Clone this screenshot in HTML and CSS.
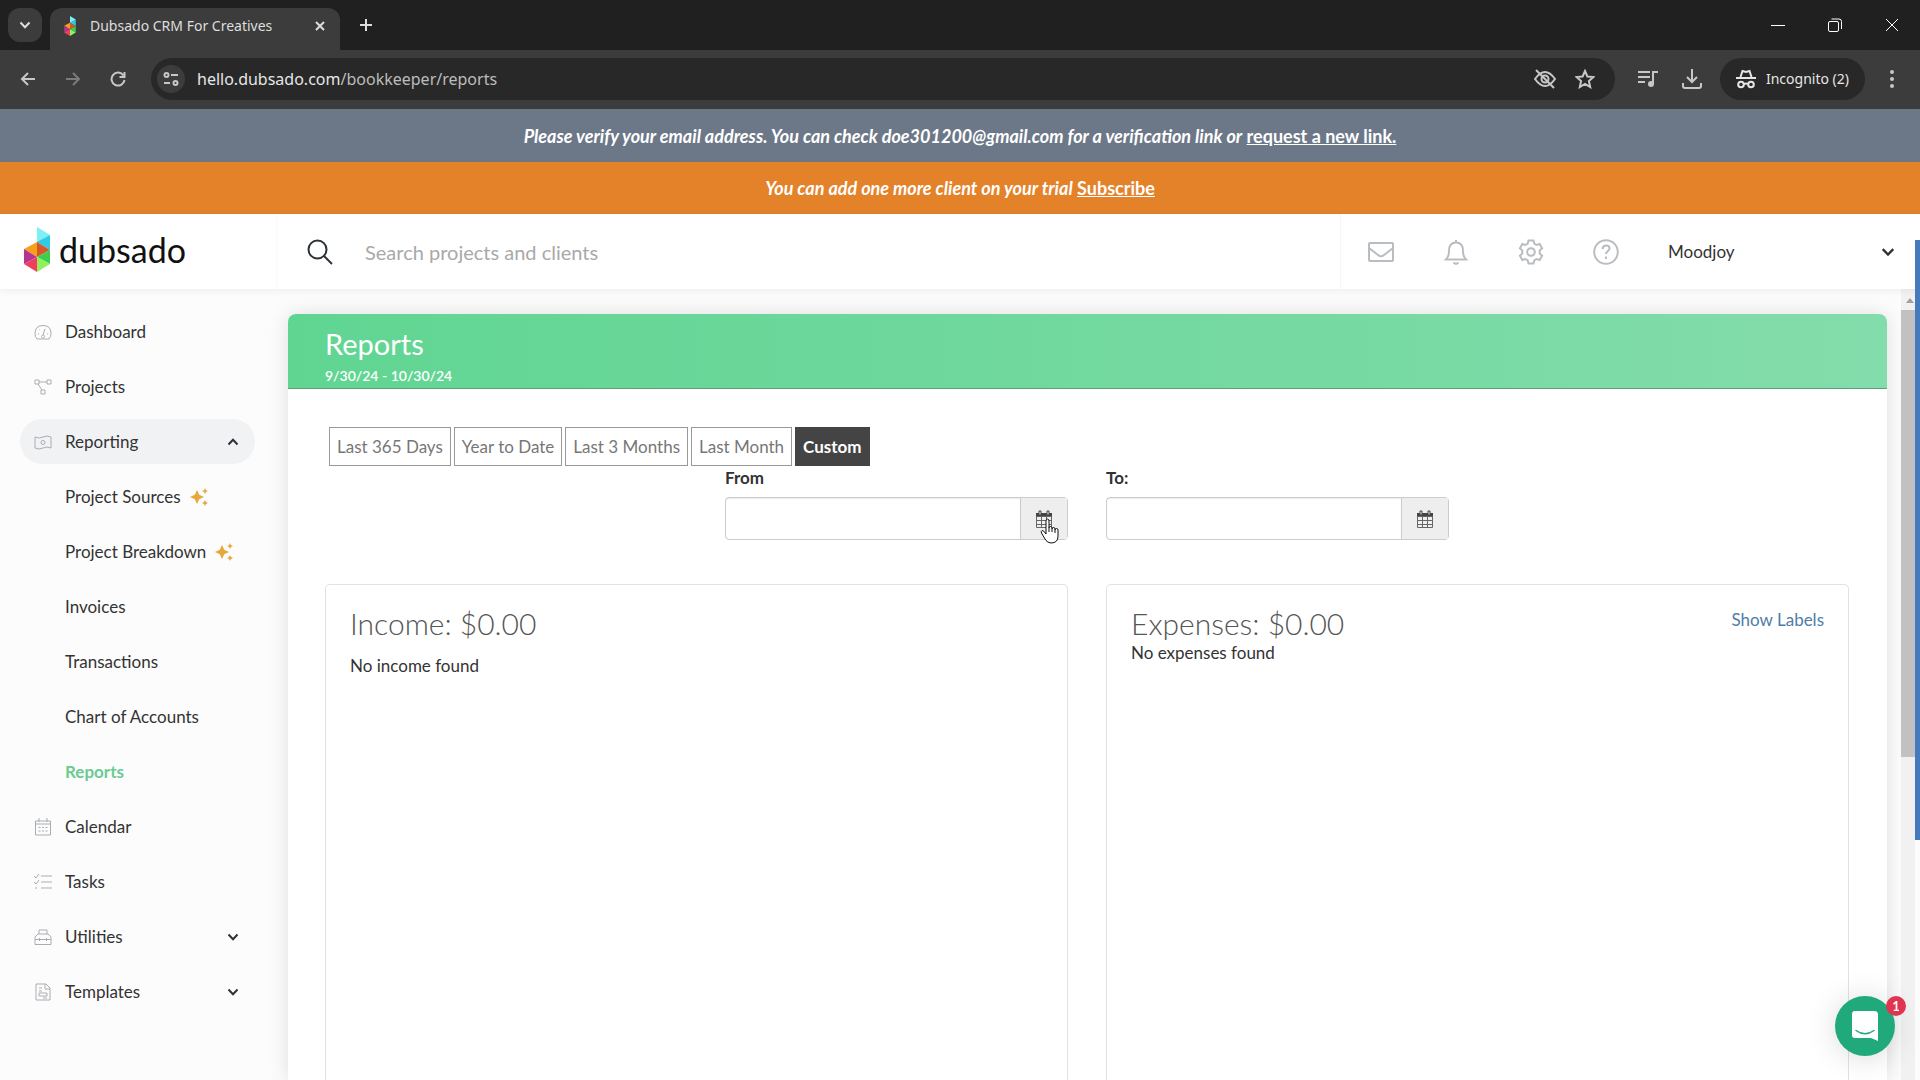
FILE: index.html
```html
<!DOCTYPE html>
<html lang="en">
<head>
  <meta charset="UTF-8" />
  <meta name="viewport" content="width=device-width, initial-scale=1.0" />
  <title>Dubsado CRM For Creatives</title>
  <link rel="stylesheet" href="styles.css">
</head>
<body>
  <svg class="sprite" aria-hidden="true">
    <defs>
      <symbol id="i-down" viewBox="0 0 12 12"><path d="M1.5 3.5 6 8.2l4.500-4.700" /></symbol>
      <symbol id="i-logo" viewBox="0 0 26 45">
        <path fill="#7df0f5" d="M13 0 26 8 13 16z" /><path fill="#2fcbe4" d="M26 8v15L13 15z" />
        <path fill="#f6a11c" d="M13 15v15L0 22z" /><path fill="#d8552a" d="m13 15 13 8-13 7z" />
        <path fill="#b5348f" d="M0 22l13 8-13 7z" /><path fill="#f03e5e" d="M0 37l13-7v15z" />
        <path fill="#3ccf4e" d="m26 23-13 7 13 7z" /><path fill="#93f05a" d="M13 30l13 7-13 8z" />
      </symbol>
      <symbol id="i-sparkle" viewBox="0 0 18 18">
        <path d="M7 2 9.200 6.800l4.800 2.200-4.800 2.200L7 16l-2.200-4.800L0 9l4.800-2.200zM15 0l1 2.200 2 .8-2 1-1 2-1-2-2-1 2-.8zM15 12l1 2 2 1-2 1-1 2-1-2-2-1 2-1z" />
      </symbol>
      <symbol id="i-cal" viewBox="0 0 18 18">
        <path fill="#444" d="M1 3h16v4H1z" /><path fill="none" stroke="#666" d="M1.500 6.500h15v11h-15zM6.500 6.500v11M11.500 6.500v11M1.500 10.500h15M1.500 14.500h15" />
        <path fill="#eee" stroke="#444" d="M4 1h2v4H4zM12 1h2v4h-2z" />
      </symbol>
    </defs>
  </svg>

  <div class="tabstrip">
    <button class="tab-search" aria-label="Search tabs"><svg class="line" width="12" height="12"><use href="#i-down" /></svg></button>
    <div class="tab">
      <svg width="12" height="20"><use href="#i-logo" /></svg>
      <span>Dubsado CRM For Creatives</span>
      <button aria-label="Close tab"><svg class="line" width="10" height="10" viewBox="0 0 10 10"><path d="m1 1 8 8M9 1 1 9" /></svg></button>
    </div>
    <button class="new-tab" aria-label="New tab"><svg class="line" width="12" height="12" viewBox="0 0 12 12"><path d="M6 0v12M0 6h12" /></svg></button>
    <div class="window-buttons">
      <button aria-label="Minimize"><svg width="14" height="14" viewBox="0 0 14 14"><path d="M0 7.500h14" /></svg></button>
      <button aria-label="Restore"><svg width="14" height="14" viewBox="0 0 14 14"><path d="M.5 5q0-1.500 1.500-1.500h7q1.500 0 1.500 1.500v7q0 1.500-1.500 1.500H2Q.5 13.500.5 12zM3.500 1h7.500q2.500 0 2.500 2.500V11" /></svg></button>
      <button aria-label="Close"><svg width="14" height="14" viewBox="0 0 14 14"><path d="m1 1 12 12M13 1 1 13" /></svg></button>
    </div>
  </div>

  <div class="toolbar">
    <button aria-label="Back"><svg class="line" width="16" height="16" viewBox="0 0 16 16"><path d="M15 8H2M8 2 2 8l6 6" /></svg></button>
    <button class="dim" aria-label="Forward"><svg class="line" width="16" height="16" viewBox="0 0 16 16"><path d="M1 8h13M8 2l6 6-6 6" /></svg></button>
    <button aria-label="Reload"><svg class="line" width="16" height="16" viewBox="0 0 16 16"><path d="M13.500 4.500A6.500 6.500 0 1 0 14.500 9M14.500 1v5h-5" /></svg></button>
    <div class="omnibox">
      <button class="site-info" aria-label="Site information"><svg class="line" width="16" height="16" viewBox="0 0 16 16"><circle cx="3.500" cy="4" r="2" /><path d="M8 4h7M1 12h6" /><circle cx="12.500" cy="12" r="2" /></svg></button>
      <div class="url">hello.dubsado.com<span>/bookkeeper/reports</span></div>
      <button aria-label="Tracking blocked"><svg class="line" width="24" height="22" viewBox="0 0 24 22"><path d="M2 11Q12-3 22 11 12 25 2 11zM3 2l18 18" /><circle cx="12" cy="11" r="3.500" /></svg></button>
      <button aria-label="Bookmark"><svg class="line" width="20" height="20" viewBox="0 0 20 20"><path d="m10 2 2.400 5.500 6 .5-4.500 4 1.300 6L10 14.800 4.800 18l1.300-6-4.500-4 6-.5z" /></svg></button>
    </div>
    <button class="media" aria-label="Media controls"><svg class="line" width="20" height="18" viewBox="0 0 20 18"><path d="M0 2h12M0 7h12M0 12h7M15 14V2h5" /><circle cx="13" cy="14" r="3" fill="#c7c7c7" stroke="none" /></svg></button>
    <button aria-label="Downloads"><svg class="line" width="20" height="20" viewBox="0 0 20 20"><path d="M10 0v13M5 8l5 5 5-5M1 14v3q0 2 2 2h14q2 0 2-2v-3" /></svg></button>
    <button class="incognito">
      <svg class="line" width="20" height="20" viewBox="0 0 20 20"><path d="M0 9h20M4.500 8l2-6L10 3l3.500-1 2 6M8 15q2-1 4 0" /><circle cx="5" cy="15.500" r="2.800" /><circle cx="15" cy="15.500" r="2.800" /></svg>
      Incognito (2)
    </button>
    <button aria-label="Menu"><svg class="dots" width="4" height="18" viewBox="0 0 4 18"><circle cx="2" cy="2" r="2" /><circle cx="2" cy="9" r="2" /><circle cx="2" cy="16" r="2" /></svg></button>
  </div>

  <div class="banner verify"><em>Please verify your email address. You can check doe301200@gmail.com for a verification link or</em>&nbsp;<a href="#">request a new link.</a></div>
  <div class="banner trial"><em>You can add one more client on your trial</em>&nbsp;<a href="#">Subscribe</a></div>

  <header>
    <a class="brand" href="#"><svg width="26" height="45"><use href="#i-logo" /></svg><span>dubsado</span></a>
    <div class="search">
      <svg width="26" height="26" viewBox="0 0 26 26"><circle cx="10.500" cy="10.500" r="9" /><path d="m17 17 8 8" /></svg>
      <input type="text" placeholder="Search projects and clients" aria-label="Search projects and clients">
    </div>
    <nav class="quick">
      <button aria-label="Mail"><svg width="26" height="26" viewBox="0 0 26 26"><rect x="1" y="4" width="24" height="18" rx="1" /><path d="m1 9 9 7q3 2.500 6 0l9-7" /></svg></button>
      <button aria-label="Notifications"><svg width="26" height="26" viewBox="0 0 26 26"><path d="M13 1v2M3 20.500h20q-3-3-3-8.500 0-8.500-7-8.500T6 12q0 5.500-3 8.500zM10.500 23.500q2.500 2.500 5 0" /></svg></button>
      <button aria-label="Settings"><svg width="26" height="26" viewBox="0 0 26 26"><path d="M10.500 1.500h5l.8 3.200 2.200 1.300 3.200-1 2.400 4.200-2.400 2.300v3l2.400 2.300-2.400 4.200-3.200-1-2.200 1.300-.8 3.200h-5l-.8-3.200L7.500 20l-3.200 1-2.400-4.200 2.400-2.300v-3L1.900 9.200 4.300 5l3.200 1 2.200-1.300z" /><circle cx="13" cy="13" r="3.800" /></svg></button>
      <button aria-label="Help"><svg width="26" height="26" viewBox="0 0 26 26"><circle cx="13" cy="13" r="11.800" /><path d="M9.500 10q.5-3.500 3.700-3.500 3.300 0 3.300 3c0 2.500-3.500 2.500-3.500 5.500M13 17.500V20" /></svg></button>
    </nav>
    <button class="account">Moodjoy <svg class="line" width="14" height="14"><use href="#i-down" /></svg></button>
  </header>

  <div class="app">
    <nav class="sidebar">
      <a href="#"><svg viewBox="0 0 18 18"><path d="M3 16q-2-2-2-5.500Q1 2.500 9 2.500t8 8q0 3.500-2 5.500zM9 12l2-6M4 11h1M13 11h1M5.500 6.500l.5.500M9 12a1.500 1.500 0 1 0 .1 0" /></svg>Dashboard</a>
      <a href="#"><svg viewBox="0 0 18 18"><path d="M1 2h4v4H1zM13 2h4v4h-4zM7 12h4v4H7zM5 4h8M4 6l4 6" /></svg>Projects</a>
      <a href="#" class="open"><svg viewBox="0 0 18 18"><path d="M1 4q4 2 8 0t8 0v11q-4-2-8 0t-8 0z" /><circle cx="9" cy="9.500" r="2" /></svg>Reporting<svg class="chev up"><use href="#i-down" /></svg></a>
      <a href="#" class="sub">Project Sources <svg class="spark"><use href="#i-sparkle" /></svg></a>
      <a href="#" class="sub">Project Breakdown <svg class="spark"><use href="#i-sparkle" /></svg></a>
      <a href="#" class="sub">Invoices</a>
      <a href="#" class="sub">Transactions</a>
      <a href="#" class="sub">Chart of Accounts</a>
      <a href="#" class="sub current">Reports</a>
      <a href="#"><svg viewBox="0 0 18 18"><path d="M1.500 3h15v14h-15zM1.500 6h15M5 0v4M13 0v4M4.500 9.500h2M8 9.500h2M11.500 9.500h2M4.500 13h2M8 13h2M11.500 13h2" /></svg>Calendar</a>
      <a href="#"><svg viewBox="0 0 18 18"><path d="M7 3h11M7 9h11M7 15h11M0 3l2 2 3-4M0 9l2 2 3-4M1 15h2" /></svg>Tasks</a>
      <a href="#"><svg viewBox="0 0 18 18"><path d="M1 16.500V9l3-3h10l3 3v7.500zM5 6V2h8v4M1 11.500h16M5.500 10v3M12.500 10v3" /></svg>Utilities<svg class="chev"><use href="#i-down" /></svg></a>
      <a href="#"><svg viewBox="0 0 18 18"><path d="M2 1h10l4 4v12H2zM11 1v5h5M5 5h3M5 8h3M5 10h8v3H5zM9 15h4" /></svg>Templates<svg class="chev"><use href="#i-down" /></svg></a>
    </nav>

    <main>
      <section class="report">
        <div class="report-head">
          <h1>Reports</h1>
          <p>9/30/24 - 10/30/24</p>
        </div>
        <div class="report-body">
          <div class="ranges">
            <button>Last 365 Days</button>
            <button>Year to Date</button>
            <button>Last 3 Months</button>
            <button>Last Month</button>
            <button class="active">Custom</button>
          </div>
          <div class="dates">
            <div class="field">
              <label for="from">From</label>
              <div class="input-group">
                <input type="text" id="from">
                <button aria-label="Pick start date"><svg width="18" height="18"><use href="#i-cal" /></svg>
                  <svg class="pointer" width="20" height="26" viewBox="0 0 20 26"><path d="M6 14V3q0-2 1.500-2T9 3v7q0-1.500 1.500-1.500T12 10v1q0-1.500 1.500-1.500T15 11v1q0-1.500 1.500-1.500T18 12v6q0 7-7 7-4 0-6-4l-3.500-6q-.8-2 .5-2.500 1.500-.5 4 3.500zM9 10v4M12 11v3M15 12v3" /></svg></button>
              </div>
            </div>
            <div class="field">
              <label for="to">To:</label>
              <div class="input-group">
                <input type="text" id="to">
                <button aria-label="Pick end date"><svg width="18" height="18"><use href="#i-cal" /></svg></button>
              </div>
            </div>
          </div>
          <div class="panels">
            <div class="panel income">
              <h2>Income: $0.00</h2>
              <p>No income found</p>
            </div>
            <div class="panel">
              <a class="labels" href="#">Show Labels</a>
              <h2>Expenses: $0.00</h2>
              <p>No expenses found</p>
            </div>
          </div>
        </div>
      </section>
    </main>

    <div class="scrollbar"><span class="arrow"></span><span class="thumb"></span></div>
  </div>

  <div class="page-scroll"></div>
  <button class="chat" aria-label="Open chat">
    <svg width="28" height="32" viewBox="0 0 28 32"><path fill="#fff" d="M3.500 1h20Q27 1 27 4.500V31l-7-3H3.500Q1 28 1 25V4.500Q1 1 3.500 1z" /><path fill="none" stroke="#20a97a" stroke-width="1.500" stroke-linecap="round" d="M5 20.500q9 6.500 18 0" /></svg>
    <span class="badge">1</span>
  </button>
</body>
</html>
```
FILE: styles.css
```css
* {
  box-sizing: border-box;
}
body {
  display: flex;
  flex-direction: column;
  height: 100vh;
  margin: 0;
  overflow: hidden;
  font-family: Lato, "Open Sans", sans-serif;
  font-size: 17px;
  line-height: 24px;
  color: #333;
  background: #fcfcfc;
}
button, input {
  font: inherit;
  color: inherit;
  border: 0;
  padding: 0;
  background: none;
}
a {
  color: inherit;
  text-decoration: none;
}
svg {
  display: block;
  flex-shrink: 0;
}
h1, h2, p {
  margin: 0;
}
.sprite {
  position: absolute;
  width: 0;
  height: 0;
}
.line {
  fill: none;
  stroke: currentColor;
  stroke-width: 2;
}

/* browser */
.tabstrip {
  display: flex;
  align-items: center;
  flex: 0 0 50px;
  padding-left: 8px;
  background: #202020;
  color: #dedede;
  font: 14px/20px "Noto Sans", sans-serif;
}
.tabstrip button {
  display: grid;
  place-items: center;
}
.tab-search {
  width: 34px;
  height: 34px;
  border-radius: 12px;
  background: #3c3c3c;
}
.tab {
  display: flex;
  align-items: center;
  gap: 14px;
  align-self: flex-end;
  width: 290px;
  height: 42px;
  margin-left: 8px;
  padding: 0 15px 6px 14px;
  border-radius: 12px 12px 0 0;
  background: #3c3c3c;
}
.tab button {
  margin-left: auto;
}
.new-tab {
  margin-left: 20px;
}
.window-buttons {
  display: flex;
  margin-left: auto;
}
.window-buttons button {
  width: 57px;
}
.window-buttons svg {
  fill: none;
  stroke: #fff;
}
.toolbar {
  display: flex;
  align-items: center;
  gap: 29px;
  flex: 0 0 59px;
  padding: 0 26px 2px 20px;
  background: #3c3c3c;
  color: #c7c7c7;
  font: 16px/24px "Noto Sans", sans-serif;
}
.toolbar .dim {
  color: #7b7b7b;
}
.omnibox {
  display: flex;
  align-items: center;
  gap: 18px;
  flex: 1;
  height: 42px;
  margin: 0 -6px 0 -4px;
  padding: 0 20px 0 6px;
  border-radius: 21px;
  background: #282828;
}
.site-info {
  display: grid;
  place-items: center;
  width: 28px;
  height: 28px;
  border-radius: 50%;
  background: #3c3c3c;
}
.url {
  flex: 1;
  margin-left: -6px;
  color: #e6e6e6;
}
.url span {
  color: #bcbcbc;
}
.media {
  margin-right: -5px;
}
.incognito {
  display: flex;
  align-items: center;
  gap: 10px;
  height: 42px;
  margin: 0 -4px 0 -11px;
  padding: 0 16px;
  border-radius: 21px;
  background: #282828;
  color: #e6e6e6;
  font-size: 14px;
}
.dots {
  fill: currentColor;
}

/* notices */
.banner {
  display: flex;
  justify-content: center;
  align-items: center;
  flex: 0 0 53px;
  color: #fff;
  font-weight: bold;
  font-size: 18px;
}
.banner a {
  text-decoration: underline;
}
.verify {
  background: #6c7888;
}
.trial {
  flex-basis: 52px;
  background: #e4822a;
}

/* top bar */
header {
  position: relative;
  z-index: 1;
  display: flex;
  flex: 0 0 75px;
  background: #fff;
  box-shadow: 0 2px 8px rgba(0, 0, 0, 0.06);
}
.brand {
  display: flex;
  align-items: center;
  gap: 9px;
  width: 277px;
  padding: 0 0 4px 24px;
  border-right: 1px solid #fafafa;
  color: #111;
  font-size: 34px;
}
.search {
  display: flex;
  align-items: center;
  gap: 32px;
  flex: 1;
  padding-left: 30px;
  border-right: 1px solid #f6f6f6;
}
.search svg {
  fill: none;
  stroke: #2c3238;
  stroke-width: 2;
}
.search input {
  flex: 1;
  font-size: 20px;
  outline: 0;
}
.search input::placeholder {
  color: #a9a9a9;
}
.quick {
  display: flex;
  align-items: center;
  gap: 49px;
  padding: 0 49px 0 27px;
}
.quick svg {
  fill: none;
  stroke: #b9bdc1;
  stroke-width: 2;
}
.account {
  display: flex;
  justify-content: space-between;
  align-items: center;
  width: 252px;
  padding-right: 25px;
}

/* layout */
.app {
  display: flex;
  flex: 1;
  min-height: 0;
  padding-right: 5px;
}
.sidebar {
  display: flex;
  flex-direction: column;
  gap: 10px;
  flex: 0 0 255px;
  padding: 20px 0 0 20px;
}
.sidebar a {
  display: flex;
  align-items: center;
  gap: 13px;
  height: 45px;
  padding: 0 16px 0 14px;
  border-radius: 23px;
}
.sidebar svg {
  width: 18px;
  height: 18px;
  fill: none;
  stroke: #a9adb2;
}
.sidebar .sub {
  gap: 9px;
  padding-left: 45px;
}
.sidebar .open {
  background: #f1f2f4;
}
.sidebar .current {
  color: #6bcb93;
  font-weight: bold;
}
.sidebar .chev {
  width: 12px;
  height: 12px;
  margin-left: auto;
  stroke: #2c3238;
  stroke-width: 2;
}
.sidebar .up {
  transform: rotate(180deg);
}
.sidebar .spark {
  fill: #e5a83b;
  stroke: none;
}
main {
  flex: 1;
  padding: 25px 14px 0 33px;
}
.report {
  height: 100%;
  border-radius: 8px 8px 0 0;
  background: #fff;
  box-shadow: 0 0 20px rgba(0, 0, 0, 0.12);
}
.report-head {
  height: 75px;
  padding: 12px 37px 0;
  border-bottom: 1px solid #5f9f7c;
  border-radius: 8px 8px 0 0;
  background: linear-gradient(90deg, #60d592, #83dcab);
  color: #fff;
}
.report-head h1 {
  font-size: 29px;
  font-weight: normal;
  line-height: 36px;
}
.report-head p {
  font-size: 14px;
  font-weight: 600;
  line-height: 28px;
}
.report-body {
  display: flex;
  flex-direction: column;
  height: calc(100% - 75px);
  padding: 38px 38px 0 37px;
}
.ranges {
  display: flex;
  gap: 3px;
  padding-left: 4px;
}
.ranges button {
  height: 39px;
  padding: 0 7px;
  border: 1px solid #999;
  color: #777;
}
.ranges .active {
  border-color: #444;
  background: #444;
  color: #fff;
  font-weight: bold;
}
.dates {
  display: flex;
  justify-content: center;
  gap: 38px;
}
.field {
  width: calc(25% - 38px);
}
.field label {
  display: block;
  height: 31px;
  font-weight: bold;
}
.input-group {
  display: flex;
  height: 43px;
  border: 1px solid #ccc;
  border-radius: 4px;
}
.input-group input {
  flex: 1;
  min-width: 0;
  padding: 0 12px;
  box-shadow: inset 0 1px 1px rgba(0, 0, 0, 0.08);
}
.input-group button {
  position: relative;
  display: grid;
  place-items: center;
  width: 47px;
  border-left: 1px solid #ccc;
  background: #eee;
}
.pointer {
  position: absolute;
  left: 19px;
  top: 20px;
  fill: #fff;
  stroke: #111;
}
.panels {
  display: grid;
  grid-template-columns: 1fr 1fr;
  gap: 38px;
  flex: 1;
  margin-top: 44px;
}
.panel {
  padding: 20px 24px;
  border: 1px solid #e2e2e2;
  border-bottom: 0;
  border-radius: 5px 5px 0 0;
}
.panel h2 {
  color: #555;
  font-size: 30px;
  font-weight: 300;
  line-height: 36px;
}
.income h2 {
  margin-bottom: 13px;
}
.labels {
  float: right;
  line-height: 30px;
  color: #4f7ca8;
}

/* scrollbars and chat */
.scrollbar {
  width: 14px;
  padding-top: 7px;
  background: #f1f1f1;
}
.arrow, .thumb {
  display: block;
}
.arrow {
  margin: 2px 2px 7px 5px;
  border: 4px solid transparent;
  border-top: 0;
  border-bottom: 5px solid #a0a0a0;
}
.thumb {
  height: 57%;
  background: #c1c1c1;
}
.page-scroll {
  position: fixed;
  z-index: 2;
  top: 240px;
  right: 0;
  width: 5px;
  height: 600px;
  background: #457bbd;
}
.chat {
  position: fixed;
  right: 25px;
  bottom: 24px;
  display: grid;
  place-items: center;
  width: 60px;
  height: 60px;
  border-radius: 50%;
  background: #20a97a;
  box-shadow: 0 2px 30px rgba(0, 0, 0, 0.15);
}
.badge {
  position: absolute;
  top: 0;
  right: -11px;
  width: 20px;
  border-radius: 50%;
  background: #e03550;
  color: #fff;
  font-size: 13px;
  font-weight: bold;
  line-height: 20px;
}
```
